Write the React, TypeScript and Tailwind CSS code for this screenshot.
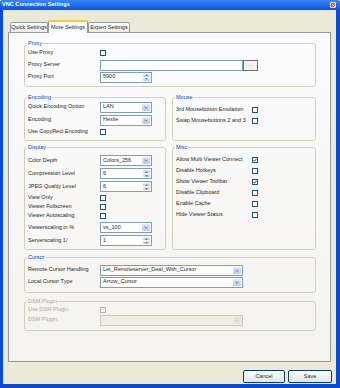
import type { ReactNode } from "react";

const Box = ({ checked = false, disabled = false }: { checked?: boolean; disabled?: boolean }) => (
  <span
    className={`w-[6px] h-[6px] border flex items-center justify-center ${
      disabled ? "border-[#b8b6aa] bg-[#f4f3ee]" : "border-[#1c5180] bg-white"
    }`}
  >
    {checked && (
      <svg viewBox="0 0 6 6" className="w-[4px] h-[4px]">
        <path d="M0.6 3 L2.3 4.8 L5.4 1" stroke="#222" strokeWidth="1.3" fill="none" />
      </svg>
    )}
  </span>
);

const Drop = ({ value, w = "w-[52px]", disabled = false }: { value?: string; w?: string; disabled?: boolean }) => (
  <div
    className={`flex h-[11px] border ${w} ${
      disabled ? "border-[#c9c7ba] bg-[#efede3]" : "border-[#7f9db9] bg-white"
    }`}
  >
    <span className="flex-1 pl-[2px] flex items-center overflow-hidden whitespace-nowrap">{value}</span>
    <span
      className={`w-[8px] m-px rounded-[1px] flex items-center justify-center ${
        disabled ? "bg-[#e6e4d8]" : "bg-linear-to-b from-[#e3ebfd] to-[#b6c9f7]"
      }`}
    >
      <svg viewBox="0 0 6 4" className="w-[4px] h-[3px]">
        <path d="M0.5 0.8 L3 3.2 L5.5 0.8" stroke={disabled ? "#c9c7ba" : "#4d6185"} strokeWidth="1.2" fill="none" />
      </svg>
    </span>
  </div>
);

const Spin = ({ value }: { value: string }) => (
  <div className="flex h-[11px] w-[52px] border border-[#7f9db9] bg-white">
    <span className="flex-1 pl-[2px] flex items-center">{value}</span>
    <span className="w-[7px] m-px flex flex-col gap-px">
      <span className="flex-1 rounded-[1px] bg-linear-to-b from-[#e3ebfd] to-[#b6c9f7] flex items-center justify-center">
        <svg viewBox="0 0 4 2" className="w-[3px] h-[2px]">
          <path d="M0 2 L2 0 L4 2 Z" fill="#4d6185" />
        </svg>
      </span>
      <span className="flex-1 rounded-[1px] bg-linear-to-b from-[#e3ebfd] to-[#b6c9f7] flex items-center justify-center">
        <svg viewBox="0 0 4 2" className="w-[3px] h-[2px]">
          <path d="M0 0 L2 2 L4 0 Z" fill="#4d6185" />
        </svg>
      </span>
    </span>
  </div>
);

const Row = ({
  label,
  h,
  lw = "w-[72px]",
  dim = false,
  className = "",
  children,
}: {
  label: string;
  h: string;
  lw?: string;
  dim?: boolean;
  className?: string;
  children?: ReactNode;
}) => (
  <div className={`flex items-center ${h} ${className}`}>
    <span className={`${lw} shrink-0 whitespace-nowrap ${dim ? "text-[#aca899]" : ""}`}>{label}</span>
    {children}
  </div>
);

const Group = ({
  title,
  className = "",
  dim = false,
  children,
}: {
  title: string;
  className?: string;
  dim?: boolean;
  children: ReactNode;
}) => (
  <fieldset className={`border border-[#d0d0bf] rounded-[3px] px-[3px] ${className}`}>
    <legend className={`px-px -ml-px leading-[8px] ${dim ? "text-[#aca899]" : "text-[#0046d5]"}`}>{title}</legend>
    {children}
  </fieldset>
);

const XpButton = ({ label, w }: { label: string; w: string }) => (
  <div
    className={`${w} h-[13px] border border-[#003c74] rounded-[2px] bg-linear-to-b from-white to-[#e6e4dc] flex items-center justify-center`}
  >
    {label}
  </div>
);

const Tab = ({ label, w }: { label: string; w: string }) => (
  <div
    className={`${w} h-[10px] border border-b-0 border-[#919b9c] rounded-t-[2px] bg-linear-to-b from-white to-[#ecebe5] flex items-center justify-center whitespace-nowrap`}
  >
    {label}
  </div>
);

export default function App() {
  return (
    <div className="w-[340px] h-[388px] bg-[#0a4ad6] rounded-t-[3px] flex flex-col text-[5.5px] leading-none text-[#262626] font-['Liberation_Sans',Arial,sans-serif] overflow-hidden">
      {/* title bar */}
      <div className="h-[10px] shrink-0 bg-linear-to-b from-[#3a86f5] to-[#0752e2] flex items-center justify-between pl-[2px] pr-[4px]">
        <span className="text-white font-bold text-[5.6px]">VNC Connection Settings</span>
        <span className="w-[6px] h-[6px] rounded-[1px] bg-[#de5a3e] border border-white/70 flex items-center justify-center">
          <svg viewBox="0 0 4 4" className="w-[3px] h-[3px]">
            <path d="M0.5 0.5 L3.5 3.5 M3.5 0.5 L0.5 3.5" stroke="white" strokeWidth="0.9" />
          </svg>
        </span>
      </div>

      {/* client */}
      <div className="flex-1 ml-[3px] mr-[4px] mb-[4px] bg-[#ece9d8] flex flex-col">
        <div className="h-[22px] shrink-0 pt-[10px] pl-[7px] flex items-end">
          <Tab label="Quick Settings" w="w-[38px]" />
          <div className="relative z-10 -mb-px w-[40px] h-[13px] border border-b-0 border-[#919b9c] border-t-2 border-t-[#ffc83c] rounded-t-[2px] bg-[#fcfcfe] flex items-center justify-center whitespace-nowrap">
            More Settings
          </div>
          <Tab label="Expert Settings" w="w-[42px]" />
        </div>

        <div className="flex-1 mx-[5px] border border-[#919b9c] bg-linear-to-b from-[#fcfcfe] to-[#f4f3ee] pl-[15px] pr-[14px] pt-[6px] flex flex-col">
          <Group title="Proxy">
            <div className="flex flex-col pb-[3px]">
              <Row label="Use Proxy" h="h-[12px]">
                <Box />
              </Row>
              <Row label="Proxy Server" h="h-[12px]">
                <div className="w-[143px] h-[11px] border border-[#7f9db9] bg-white" />
                <div className="w-[15px] h-[11px] border border-[#6f6f6f] bg-[#f4f3ee] flex items-end justify-center pb-[2px] text-[#8a8a8a]">
                  ...
                </div>
              </Row>
              <Row label="Proxy Port" h="h-[12px]">
                <Spin value="5900" />
              </Row>
            </div>
          </Group>

          <div className="flex gap-[6px] mt-[6px]">
            <Group title="Encoding" className="w-[142px]">
              <div className="flex flex-col gap-px pb-[3px]">
                <Row label="Quick Encoding Option" h="h-[12px]">
                  <Drop value="LAN" />
                </Row>
                <Row label="Encoding" h="h-[12px]">
                  <Drop value="Hexile" />
                </Row>
                <Row label="Use CopyRect Encoding" h="h-[10px]">
                  <Box />
                </Row>
              </div>
            </Group>
            <Group title="Mouse" className="flex-1">
              <div className="flex flex-col pt-[3px]">
                <Row label="3rd Mousebutton Emulation" h="h-[11px]" lw="w-[76px]">
                  <Box />
                </Row>
                <Row label="Swap Mousebuttons 2 and 3" h="h-[11px]" lw="w-[76px]">
                  <Box />
                </Row>
              </div>
            </Group>
          </div>

          <div className="flex gap-[6px] mt-[2px]">
            <Group title="Display" className="w-[142px]">
              <div className="flex flex-col pt-[3px] pb-[2px]">
                <Row label="Color Depth" h="h-[13px]">
                  <Drop value="Colors_256" />
                </Row>
                <Row label="Compression Level" h="h-[13px]">
                  <Spin value="6" />
                </Row>
                <Row label="JPEG Quality Level" h="h-[13px]">
                  <Spin value="6" />
                </Row>
                <Row label="View Only" h="h-[9px]">
                  <Box />
                </Row>
                <Row label="Viewer Fullscreen" h="h-[9px]">
                  <Box />
                </Row>
                <Row label="Viewer Autoscaling" h="h-[9px]">
                  <Box />
                </Row>
                <Row label="Viewerscaling in %" h="h-[13px]" className="mt-px">
                  <Drop value="vs_100" />
                </Row>
                <Row label="Serverscaling 1/" h="h-[13px]">
                  <Spin value="1" />
                </Row>
              </div>
            </Group>
            <Group title="Misc" className="flex-1">
              <div className="flex flex-col pt-[3px]">
                <Row label="Allow Multi Viewer Connect" h="h-[11px]" lw="w-[76px]">
                  <Box checked />
                </Row>
                <Row label="Disable Hotkeys" h="h-[11px]" lw="w-[76px]">
                  <Box />
                </Row>
                <Row label="Show Viewer Toolbar" h="h-[11px]" lw="w-[76px]">
                  <Box checked />
                </Row>
                <Row label="Disable Clipboard" h="h-[11px]" lw="w-[76px]">
                  <Box />
                </Row>
                <Row label="Enable Cache" h="h-[11px]" lw="w-[76px]">
                  <Box />
                </Row>
                <Row label="Hide Viewer Status" h="h-[11px]" lw="w-[76px]">
                  <Box />
                </Row>
              </div>
            </Group>
          </div>

          <Group title="Cursor" className="mt-[3px]">
            <div className="flex flex-col pt-[3px] pb-[4px]">
              <Row label="Remote Cursor Handling" h="h-[12px]">
                <Drop value="Let_Remoteserver_Deal_With_Cursor" w="w-[143px]" />
              </Row>
              <Row label="Local Cursor Type" h="h-[12px]">
                <Drop value="Arrow_Cursor" w="w-[143px]" />
              </Row>
            </div>
          </Group>

          <Group title="DSM Plugin" dim className="mt-[4px]">
            <div className="flex flex-col pb-[4px]">
              <Row label="Use DSM Plugin" h="h-[9px]" dim>
                <Box disabled />
              </Row>
              <Row label="DSM Plugin" h="h-[12px]" dim>
                <Drop w="w-[143px]" disabled />
              </Row>
            </div>
          </Group>
        </div>

        <div className="shrink-0 flex justify-end gap-[3px] pr-[4px] pt-[8px] pb-px">
          <XpButton label="Cancel" w="w-[42px]" />
          <XpButton label="Save" w="w-[44px]" />
        </div>
      </div>
    </div>
  );
}
